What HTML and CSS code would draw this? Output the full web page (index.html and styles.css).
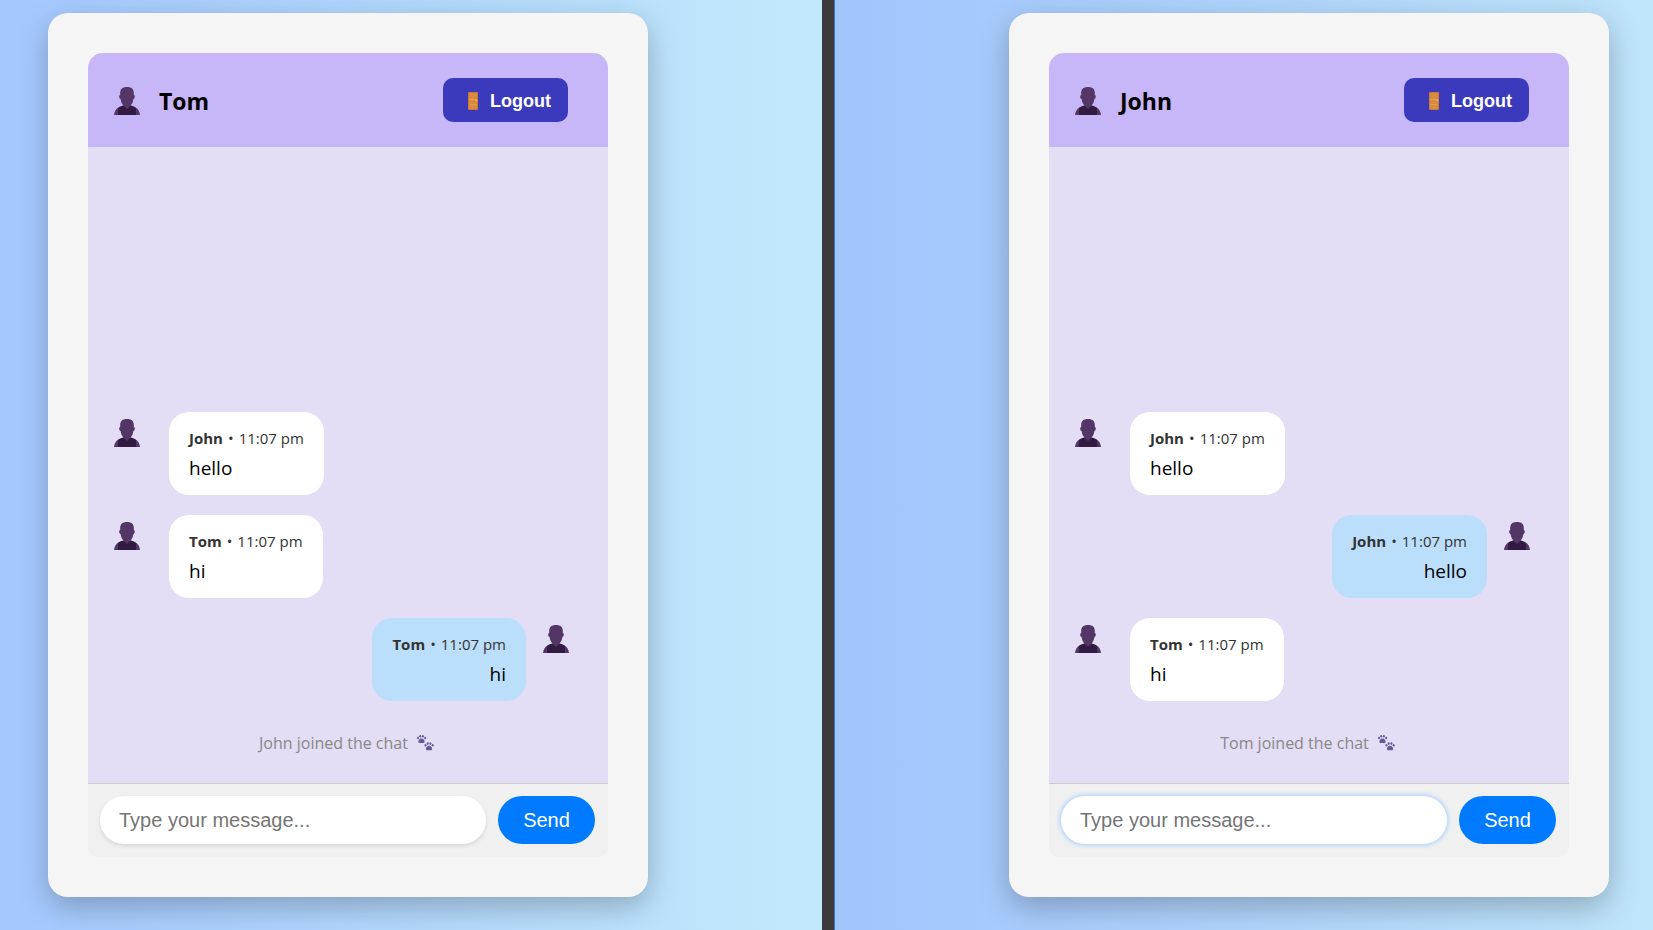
FILE: index.html
```html
<!DOCTYPE html>
<html lang="en">
<head>
<meta charset="utf-8">
<title>Chat</title>
<link rel="stylesheet" href="styles.css">
</head>
<body>
<svg class="defs" aria-hidden="true">
  <symbol id="person" viewBox="0 0 26 28">
    <path fill="#533566" d="M0 28c.4-3.600 2-6.400 5-8l5-1.500h6l5 1.500c3 1.600 4.600 4.400 5 8z"/>
    <path fill="#321b41" d="M4 28v-6.500C5.500 19.700 7.500 18.800 10 18.500h6c2.500.3 4.500 1.200 6 3V28z"/>
    <path fill="#533566" d="M13 0C8.500 0 6.200 2 6.200 6v2C4.800 8 4.800 11.500 6.600 12c.4 3.300 1.600 5.300 3.600 7.300L13 22l2.800-2.700c2-2 3.200-4 3.600-7.300 1.800-.5 1.800-4 .4-4V6c0-4-2.300-6-6.800-6z"/>
  </symbol>
  <symbol id="door" viewBox="0 0 10 18">
    <rect width="10" height="18" rx="1" fill="#c9793a"/>
    <rect x="1" y="1" width="8" height="16" fill="#d88a3f"/>
    <path d="M1 7.500h8M1 12.500h8" stroke="#e79b4d"/>
    <circle cx="8.500" cy="8.500" r=".8" fill="#f6bd62"/>
  </symbol>
  <symbol id="paws" viewBox="0 0 17 16">
    <g id="paw" fill="#635994">
      <path d="M4.500 3.500C6.500 3.500 7.800 5.500 7.600 7c-.2 1.300-1.500 1-3.100 1s-2.900.3-3.100-1C1.200 5.500 2.500 3.500 4.500 3.500z"/>
      <ellipse cx="1" cy="3" rx="1" ry="1.300"/><ellipse cx="3.200" cy="1.300" rx="1" ry="1.300"/>
      <ellipse cx="5.900" cy="1.300" rx="1" ry="1.300"/><ellipse cx="8.200" cy="3" rx="1" ry="1.300"/>
    </g>
    <use href="#paw" x="7.500" y="7.300"/>
  </symbol>
</svg>
<main class="screens">
  <section class="screen screen-left">
    <div class="card">
      <header class="chat-header">
        <svg class="avatar"><use href="#person"/></svg>
        <h1 class="user-name">Tom</h1>
        <button class="logout" type="button"><svg class="door"><use href="#door"/></svg>Logout</button>
      </header>
      <div class="messages">
        <article class="message">
          <svg class="avatar"><use href="#person"/></svg>
          <div class="bubble"><div class="meta"><strong>John</strong><span>•</span><span>11:07 pm</span></div><p class="text">hello</p></div>
        </article>
        <article class="message">
          <svg class="avatar"><use href="#person"/></svg>
          <div class="bubble"><div class="meta"><strong>Tom</strong><span>•</span><span>11:07 pm</span></div><p class="text">hi</p></div>
        </article>
        <article class="message own">
          <svg class="avatar"><use href="#person"/></svg>
          <div class="bubble"><div class="meta"><strong>Tom</strong><span>•</span><span>11:07 pm</span></div><p class="text">hi</p></div>
        </article>
        <p class="notice">John joined the chat <svg class="paws"><use href="#paws"/></svg></p>
      </div>
      <form class="composer">
        <input class="field" type="text" placeholder="Type your message..." aria-label="Message from Tom">
        <button class="send" type="button">Send</button>
      </form>
    </div>
  </section>
  <section class="screen screen-right">
    <div class="card">
      <header class="chat-header">
        <svg class="avatar"><use href="#person"/></svg>
        <h1 class="user-name">John</h1>
        <button class="logout" type="button"><svg class="door"><use href="#door"/></svg>Logout</button>
      </header>
      <div class="messages">
        <article class="message">
          <svg class="avatar"><use href="#person"/></svg>
          <div class="bubble"><div class="meta"><strong>John</strong><span>•</span><span>11:07 pm</span></div><p class="text">hello</p></div>
        </article>
        <article class="message own">
          <svg class="avatar"><use href="#person"/></svg>
          <div class="bubble"><div class="meta"><strong>John</strong><span>•</span><span>11:07 pm</span></div><p class="text">hello</p></div>
        </article>
        <article class="message">
          <svg class="avatar"><use href="#person"/></svg>
          <div class="bubble"><div class="meta"><strong>Tom</strong><span>•</span><span>11:07 pm</span></div><p class="text">hi</p></div>
        </article>
        <p class="notice">Tom joined the chat <svg class="paws"><use href="#paws"/></svg></p>
      </div>
      <form class="composer">
        <input class="field active" type="text" placeholder="Type your message..." aria-label="Message from John">
        <button class="send" type="button">Send</button>
      </form>
    </div>
  </section>
</main>
</body>
</html>
```
FILE: styles.css
```css
* { box-sizing: border-box; }

body {
  margin: 0;
  font-family: "Open Sans", "Noto Sans", sans-serif;
  color: #000;
}

.defs { position: absolute; width: 0; height: 0; }

.screens {
  display: grid;
  grid-template-columns: 834fr 819fr;
  min-height: 100vh;
}

.screen {
  display: flex;
  padding: 13px 44px 33px 48px;
}

.screen-left {
  background: linear-gradient(to right, #a4c8ff, #c2e9fb);
  border-right: 12px solid #3b3b3b;
}

.screen-right {
  justify-content: flex-end;
  background: linear-gradient(to right, #a1c4fd, #bfe5fb);
  border-left: 1px solid #3f6fe0;
}

.card {
  display: flex;
  flex-direction: column;
  width: 100%;
  max-width: 600px;
  padding: 40px;
  border-radius: 20px;
  background: #f5f5f5;
  box-shadow: 0 10px 30px rgba(0, 0, 0, 0.25);
}

.chat-header {
  display: flex;
  align-items: center;
  padding: 25px 40px 25px 26px;
  border-radius: 15px 15px 0 0;
  background: #c7b7f8;
}

.avatar { flex: none; width: 26px; height: 28px; }
.chat-header .avatar { margin-top: 2px; }

.user-name {
  flex: 1;
  margin: 2px 0 0 19px;
  font-size: 23px;
  line-height: 32px;
}

.logout {
  display: flex;
  align-items: center;
  gap: 12px;
  height: 44px;
  padding: 2px 17px 0 25px;
  border: 0;
  border-radius: 10px;
  background: #3b3abd;
  color: #fff;
  font: bold 18px "Liberation Sans", sans-serif;
}

.door { width: 10px; height: 18px; }

.messages {
  flex: 1;
  display: flex;
  flex-direction: column;
  justify-content: flex-end;
  gap: 20px;
  padding: 20px 39px 28px 26px;
  background: #e3ddf5;
}

.message { display: flex; align-items: flex-start; gap: 29px; }
.message .avatar { margin-top: 7px; }
.message.own { flex-direction: row-reverse; gap: 17px; text-align: right; }

.bubble {
  padding: 15px 20px 14px;
  border-radius: 20px;
  background: #fff;
}
.own .bubble { background: #bbdefb; }

.meta {
  display: flex;
  gap: 5px;
  font-size: 15px;
  line-height: 23px;
  color: #333;
}
.text { margin: 5px 0 0; font-size: 19px; line-height: 26px; }

.notice {
  display: flex;
  align-items: center;
  justify-content: center;
  gap: 9px;
  margin: 10px -10px 0 0;
  color: #888;
  font-size: 16px;
  line-height: 24px;
}
.paws { width: 17px; height: 16px; }

.composer {
  display: flex;
  gap: 12px;
  padding: 12px 13px 13px 12px;
  border-top: 1px solid #ccc;
  border-radius: 0 0 10px 10px;
  background: #f0f0f0;
}

.field, .send {
  height: 48px;
  border: 0;
  border-radius: 24px;
  font: 20px "Liberation Sans", sans-serif;
}

.field {
  flex: 1;
  min-width: 0;
  padding: 0 19px;
  background: #fff;
  box-shadow: 0 2px 4px rgba(0, 0, 0, 0.1);
}
.field::placeholder { color: #757575; }
.field.active { box-shadow: 0 0 5px 1px #a0cdff; }

.send { width: 97px; background: #007bff; color: #fff; }
```
